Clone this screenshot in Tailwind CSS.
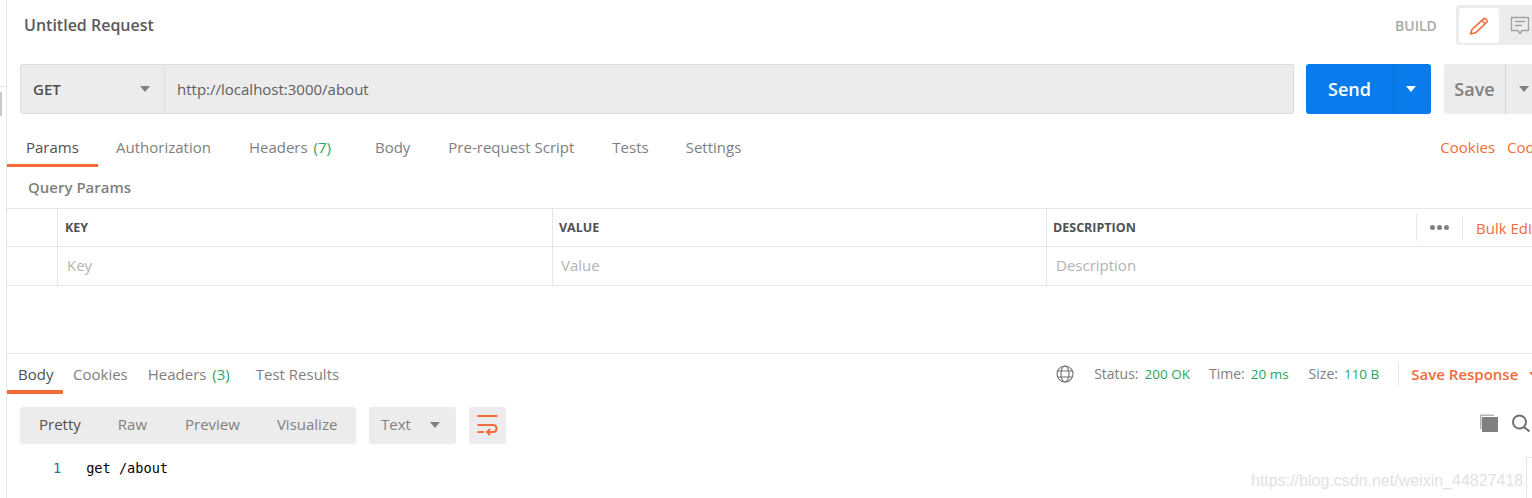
<!DOCTYPE html>
<html lang="en">
  <head>
    <meta charset="UTF-8" />
    <title>Untitled Request</title>
    <script src="https://cdn.jsdelivr.net/npm/@tailwindcss/browser@4"></script>
  </head>
  <body class="bg-white h-[498px] w-[1532px] overflow-hidden flex font-['Open_Sans',sans-serif] text-[15px] text-[#808080]">
    <!-- sidebar edge -->
    <div class="w-[7px] shrink-0 border-r border-[#e6e6e6] flex flex-col">
      <div class="mt-[86px] border-t border-[#e6e6e6] pt-[5px]">
        <div class="w-[2px] h-[24px] bg-[#c8c8c8]"></div>
      </div>
    </div>

    <main class="flex-1 min-w-0 overflow-hidden">
      <!-- title bar -->
      <div class="h-[52px] pb-[2px] flex items-center w-[1600px]">
        <h1 class="pl-[17px] text-[16px] font-semibold text-[#5a5a5a] w-[1388px]">Untitled Request</h1>
        <span class="text-[14px] font-semibold text-[#a9a9a9] w-[61px]">BUILD</span>
        <div class="flex p-[3px] h-[40px] w-[120px] rounded-[3px] bg-[#ececec]">
          <div class="w-[40px] h-[35px] bg-white rounded-[3px] flex items-center justify-center">
            <svg width="20" height="20" viewBox="0 0 20 20" fill="none" stroke="#f26b3a" stroke-width="1.6" stroke-linejoin="round"><path d="M1.5 18 L3 13.5 L14.5 2.8 Q15.5 2 16.5 2.8 L18 4.3 Q18.6 5.3 18 6 L6.5 16.8 Z M12.8 4.5 L16.2 7.8"/></svg>
          </div>
          <div class="w-[42px] h-[35px] flex items-center justify-center">
            <svg width="20" height="20" viewBox="0 0 20 20" fill="none" stroke="#a0a0a0" stroke-width="1.4" stroke-linejoin="round"><path d="M1.5 1.5 H18.5 V14.5 H12 L10 17.5 L8 14.5 H1.5 Z M5 5.5 H15 M5 9.5 H12"/></svg>
          </div>
        </div>
      </div>

      <!-- request row -->
      <div class="mt-[12px] h-[50px] flex pl-[13px] w-[1600px]">
        <div class="w-[145px] shrink-0 flex items-center justify-between pl-[12px] pr-[14px] bg-[#ececec] border border-[#dcdcdc] rounded-l-[3px]">
          <span class="font-semibold text-[#505050]">GET</span>
          <span class="w-0 h-0 border-x-[5px] border-x-transparent border-t-[6px] border-t-[#808080]"></span>
        </div>
        <div class="w-[1129px] shrink-0 flex items-center pl-[12px] bg-[#ececec] border border-l-0 border-[#dcdcdc] rounded-r-[3px] text-[#606060]">http://localhost:3000/about</div>
        <div class="ml-[12px] w-[125px] shrink-0 flex bg-[#097bed] rounded-[3px] text-white">
          <div class="w-[88px] flex items-center justify-center text-[18px] font-semibold border-r border-[#0a6fd4]">Send</div>
          <div class="flex-1 flex items-center justify-center pr-[3px]">
            <span class="w-0 h-0 border-x-[5px] border-x-transparent border-t-[6px] border-t-white"></span>
          </div>
        </div>
        <div class="ml-[13px] w-[100px] shrink-0 flex bg-[#ececec] rounded-[3px]">
          <div class="w-[62px] flex items-center justify-center text-[18px] font-semibold text-[#808080] border-r border-[#d4d4d4]">Save</div>
          <div class="flex-1 flex items-center pl-[13px]">
            <span class="w-0 h-0 border-x-[5px] border-x-transparent border-t-[6px] border-t-[#808080]"></span>
          </div>
        </div>
      </div>

      <!-- request tabs -->
      <div class="mt-[13px] h-[40px] flex w-[1600px] leading-[20px]">
        <div class="w-[91px] pl-[19px] pt-[10px] text-[#505050] border-b-[3px] border-[#f26b3a]">Params</div>
        <div class="ml-[18px] pt-[10px]">Authorization</div>
        <div class="ml-[38px] pt-[10px]">Headers <span class="ml-[2px] text-[#2ba55d]">(7)</span></div>
        <div class="ml-[44px] pt-[10px]">Body</div>
        <div class="ml-[38px] pt-[10px]">Pre-request Script</div>
        <div class="ml-[38px] pt-[10px]">Tests</div>
        <div class="ml-[37px] pt-[10px]">Settings</div>
        <div class="ml-[699px] pt-[10px] text-[#f26b3a] flex gap-[12px]"><span>Cookies</span><span>Code</span></div>
      </div>

      <!-- query params -->
      <div class="h-[41px] pl-[21px] flex items-center font-semibold text-[#808080]">Query Params</div>
      <div class="w-[1600px] border-t border-[#e6e6e6]">
        <div class="h-[38px] flex border-b border-[#e6e6e6] text-[12.5px] font-bold text-[#505050]">
          <div class="w-[51px] border-r border-[#e6e6e6]"></div>
          <div class="w-[495px] border-r border-[#e6e6e6] pl-[7px] pt-[1px] flex items-center">KEY</div>
          <div class="w-[494px] border-r border-[#e6e6e6] pl-[6px] pt-[1px] flex items-center">VALUE</div>
          <div class="w-[369px] pl-[6px] pt-[1px] flex items-center">DESCRIPTION</div>
          <div class="h-[27px] mt-[5px] w-[46px] border-l border-[#e6e6e6] flex items-center justify-center gap-[2px]">
            <i class="w-[5px] h-[5px] rounded-full bg-[#808080]"></i><i class="w-[5px] h-[5px] rounded-full bg-[#808080]"></i><i class="w-[5px] h-[5px] rounded-full bg-[#808080]"></i>
          </div>
          <div class="h-[24px] mt-[7px] border-l border-[#e6e6e6] pl-[13px] text-[15px] font-normal text-[#f26b3a] flex items-center">Bulk Edit</div>
        </div>
        <div class="h-[39px] flex border-b border-[#e6e6e6] text-[#b3b3b3] leading-[20px]">
          <div class="w-[51px] border-r border-[#e6e6e6]"></div>
          <div class="w-[495px] border-r border-[#e6e6e6] pl-[9px] pb-[2px] flex items-center">Key</div>
          <div class="w-[494px] border-r border-[#e6e6e6] pl-[8px] pb-[2px] flex items-center">Value</div>
          <div class="pl-[9px] pb-[2px] flex items-center">Description</div>
        </div>
      </div>

      <!-- response -->
      <div class="mt-[67px] w-[1600px] border-t border-[#e6e6e6] h-[41px] flex leading-[20px]">
        <div class="w-[56px] pl-[11px] pt-[10px] text-[#505050] border-b-[4px] border-[#f26b3a]">Body</div>
        <div class="ml-[10px] pt-[10px]">Cookies</div>
        <div class="ml-[20px] pt-[10px]">Headers <span class="ml-[2px] text-[#2ba55d]">(3)</span></div>
        <div class="ml-[26px] pt-[10px]">Test Results</div>
        <div class="ml-[717px] mt-[11px]">
          <svg width="18" height="18" viewBox="0 0 18 18" fill="none" stroke="#707070" stroke-width="1.1"><circle cx="9" cy="9" r="8"/><ellipse cx="9" cy="9" rx="4" ry="8"/><path d="M1.6 6 H16.4 M1.6 12 H16.4"/></svg>
        </div>
        <div class="ml-[20px] pt-[10px] text-[14px] flex">
          <span>Status:</span><span class="ml-[6px] text-[13.5px] text-[#2ba55d]">200 OK</span>
          <span class="ml-[19px]">Time:</span><span class="ml-[6px] text-[13.5px] text-[#2ba55d]">20 ms</span>
          <span class="ml-[20px]">Size:</span><span class="ml-[6px] text-[13.5px] text-[#2ba55d]">110 B</span>
        </div>
        <div class="ml-[19px] mt-[8px] h-[24px] border-l border-[#e6e6e6] pl-[12px] font-semibold text-[#f26b3a] flex items-center gap-[11px]">
          <span>Save Response</span>
          <span class="w-0 h-0 border-x-[4px] border-x-transparent border-t-[5px] border-t-[#f26b3a]"></span>
        </div>
      </div>

      <!-- response toolbar -->
      <div class="mt-[13px] h-[37px] flex pl-[13px] w-[1600px]">
        <div class="w-[336px] pb-[2px] flex items-center bg-[#ececec] rounded-[3px]">
          <span class="ml-[19px] text-[#505050]">Pretty</span>
          <span class="ml-[37px]">Raw</span>
          <span class="ml-[38px]">Preview</span>
          <span class="ml-[37px]">Visualize</span>
        </div>
        <div class="ml-[13px] w-[87px] pb-[2px] flex items-center justify-between pl-[12px] pr-[16px] bg-[#ececec] rounded-[3px]">
          <span>Text</span>
          <span class="w-0 h-0 border-x-[5px] border-x-transparent border-t-[6px] border-t-[#808080]"></span>
        </div>
        <div class="ml-[13px] w-[37px] flex items-center justify-center bg-[#ececec] rounded-[3px]">
          <svg width="21" height="22" viewBox="0 0 21 22" fill="none" stroke="#f26b3a" stroke-width="2"><path d="M0.5 1 H20.5 M0.5 10 H16 Q19.5 10 19.5 13.5 Q19.5 17 16 17 H10 M0.5 17 H7 M13 14 L10 17 L13 20"/></svg>
        </div>
        <div class="ml-[973px] mt-[7px] flex gap-[12px]">
          <svg width="20" height="18" viewBox="0 0 20 18" fill="#808080"><path d="M3 3 H19 V18 H3 Z"/><path d="M1 15 V0.5 H15 V2 H2.5 V15 Z" opacity=".6"/></svg>
          <svg width="20" height="18" viewBox="0 0 20 18" fill="none" stroke="#707070" stroke-width="2"><circle cx="8.5" cy="8" r="6.5"/><path d="M13 13 L18.5 17.5"/></svg>
        </div>
      </div>

      <!-- response body -->
      <div class="mt-[15px] flex items-center h-[19px] font-['DejaVu_Sans_Mono',monospace] text-[13.6px] w-[1600px]">
        <span class="ml-[46px] text-[#237893]">1</span>
        <span class="ml-[25px] text-black">get /about</span>
      </div>
    </main>

    <!-- watermark -->
    <div class="absolute left-[1251px] top-[469px] text-[16px] font-['Liberation_Sans',sans-serif] text-[#e2e2e2]">https://blog.csdn.net/weixin_44827418</div>
    <div class="absolute left-[1526px] top-[457px] w-[6px] h-[41px] border-l border-t border-[#e6e6e6]"></div>
  </body>
</html>
